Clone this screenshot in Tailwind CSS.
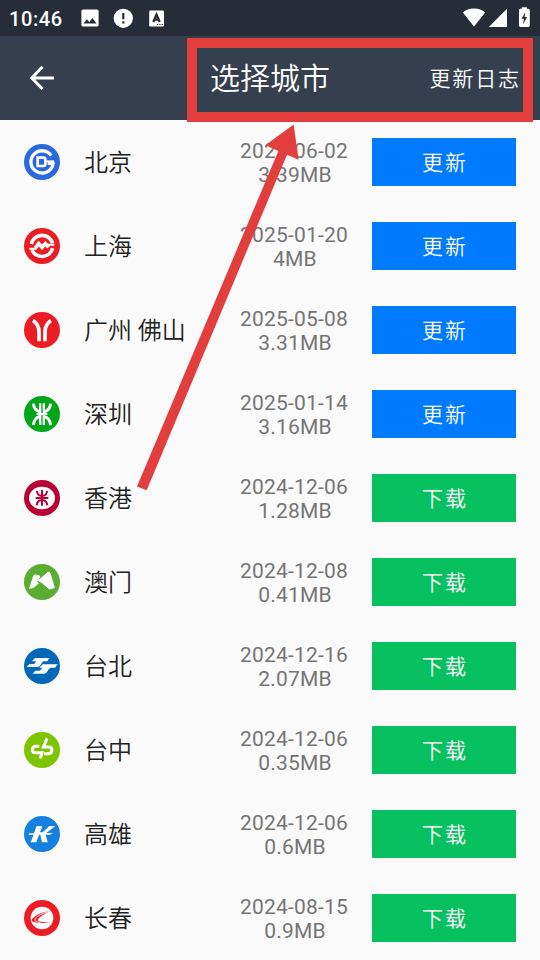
<!DOCTYPE html>
<html lang="zh-CN">
<head>
<meta charset="utf-8">
<meta name="viewport" content="width=device-width, initial-scale=1">
<title>选择城市</title>
<script src="https://cdn.jsdelivr.net/npm/@tailwindcss/browser@4"></script>
</head>
<body class="bg-[#fafafa]">
<div class="relative w-[540px] h-[960px] overflow-hidden bg-[#fafafa] font-[Roboto,'Noto_Sans_CJK_SC',sans-serif] text-[#212121]">
  <div class="h-9 bg-[#262d38] flex items-center text-white pl-[9px] pr-[10px]">
    <span class="text-[20px] leading-9 font-medium w-[72px] tracking-[0.600px] pt-px">10:46</span>
    <svg class="w-[18px] h-[18px]" viewBox="0 0 18 18"><path fill="#fff" fill-rule="evenodd" d="M2 .5h14a1.6 1.6 0 0 1 1.6 1.6v13.8a1.6 1.6 0 0 1-1.6 1.6H2A1.6 1.6 0 0 1 .4 15.900V2.100A1.600 1.600 0 0 1 2 .5zM2.500 14.500h13L11.500 9l-3.200 4.100L6 10.300z"/></svg>
    <svg class="w-5 h-5 ml-[14px]" viewBox="0 0 20 20"><circle cx="10.300" cy="10.300" r="9.600" fill="#fff"/><path stroke="#262d38" stroke-width="2.200" d="M10.300 5v6.300M10.300 13.200v2.300"/></svg>
    <svg class="w-4 h-[17px] ml-4" viewBox="0 0 16 17"><rect x=".2" y=".6" width="14.800" height="16" rx="1.300" fill="#fff"/><path fill="none" stroke="#262d38" stroke-width="2.200" d="M4.300 12 7.500 4.600l3.200 7.400M5.200 9.600h4.600"/><path stroke="#262d38" stroke-width="1.200" d="M8 14.500h1.200M10.300 14.500h1.200M12.600 14.500h1.200"/></svg>
    <svg class="w-[70px] h-9 ml-auto" viewBox="460 0 70 36"><path fill="#fff" d="M462.800 12.500Q467 8.400 474 8.400t11.200 4.100L474 26.400zM507 8.800V27h-18.200zM519 10.200q0-1.400 1.400-1.400h1.400V7.200h5v1.600h1.600q1.400 0 1.400 1.400v15.400q0 1.400-1.400 1.400h-8q-1.400 0-1.400-1.400z"/><path fill="#262d38" d="M525.300 12.300l-3.800 6.500h2.400l-.8 5.500 4-7.200h-2.500z"/></svg>
  </div>
  <header class="h-[84px] bg-[#34404f] flex items-center text-white pl-[29px] pr-[19px]">
    <svg class="w-[27px] h-[26px]" viewBox="0 0 27 26"><path fill="none" stroke="#fff" stroke-width="3" d="M13.500 1.800 2.800 13l10.700 11M2.800 13H25"/></svg>
    <h1 class="ml-[154px] text-[30px] leading-[42px] font-[350] pt-0.5">选择城市</h1>
    <span class="ml-auto text-[21px] leading-[30px] tracking-[1.900px] font-[350] pt-0.5">更新日志</span>
  </header>
  <main id="list"></main>
  <div class="absolute left-[187px] top-[38px] w-[346px] h-[84px] border-[10px] border-[#e33e3e]"></div>
  <svg class="absolute left-0 top-0 w-[540px] h-[960px]" viewBox="0 0 540 960"><path fill="#e33e3e" d="M293.700 124.600 265.300 145.300l13.100 5.600L137 486.600l9.700 3.700L287 154.800l11.500 4.900z"/></svg>
</div>
<script>
const logos = {
  beijing: '<circle cx="54" cy="54" r="54" fill="#2968df"/><g fill="none" stroke="#fff"><path stroke-width="10" d="M82 35A33.500 33.500 0 1 0 83 71Q87 65 87 58H71"/><path stroke-width="8" d="M41 41h17q6 0 6 6v13q0 6-6 6H41z"/><path stroke-width="6" d="M64 52h26"/></g>',
  shanghai: '<circle cx="54" cy="54" r="54" fill="#ec1c24"/><g fill="none" stroke="#fff" stroke-width="11"><path d="M22 48A33 33 0 0 1 86 46M86 61A33 33 0 0 1 24 66"/><path stroke-width="11" d="M34 60 44 47l10 11 10-11 10 11"/><path stroke-width="6" d="M16 62h22M70 50h21"/></g>',
  guangzhou: '<circle cx="54" cy="54" r="54" fill="#ec1c24"/><path fill="none" stroke="#fff" stroke-width="11" d="M27 26Q45 37 45 60V88M81 26Q63 37 63 60V88"/>',
  shenzhen: '<circle cx="54" cy="54" r="54" fill="#00a718"/><g fill="none" stroke="#fff"><path stroke-width="9" d="M28 23q2 20 20 25M80 23q-2 20-20 25M28 87q2-21 20-26M80 87q-2-21-20-26"/><path stroke-width="7" d="M48.500 22v65M59.500 22v65"/><path stroke-width="6" d="M38 54h32"/></g>',
  hongkong: '<circle cx="54" cy="54" r="54" fill="#b80035"/><ellipse cx="54" cy="54" rx="39" ry="34" fill="#fff"/><path fill="none" stroke="#b80035" stroke-width="6" d="M54 30v47M35 54h38M39 33q1 13 11 14h8q10-1 11-14M38 76q2-14 12-15h8q10 1 12 15"/>',
  macau: '<circle cx="54" cy="54" r="54" fill="#5aad31"/><path fill="#fff" stroke="#fff" stroke-width="3" stroke-linejoin="round" d="M17 73 29 36q2-4 6-3l12 3-2 8-7 9 5 5-14 12zM72 25q4-3 6 2L91 71 76 75 54 56 43 50z"/>',
  taipei: '<circle cx="54" cy="54" r="54" fill="#0068b7"/><g fill="#fff"><path id="tp" d="M33 30h44l-8 10h-9q-4 0-7 5l-5 8q-3 4-8 4H8l8-9h12q4 0 6-4l2-4H24z"/><path d="M56 49h45l-8 10H81q-4 0-7 5l-5 8q-3 5-8 5H26l8-9h12q4 0 6-4l2-5h-8z"/></g>',
  taichung: '<circle cx="54" cy="54" r="54" fill="#7cc500"/><g fill="none" stroke="#fff" stroke-width="9"><path d="M46 43H35q-10 1-10 10 0 9 10 9h19l-5 17"/><path d="M60 65h13q11-1 11-11 0-9-10-9H58l11-26"/></g>',
  kaohsiung: '<circle cx="54" cy="54" r="54" fill="#1680df"/><path fill="#fff" d="M38 30h17l-7 19h8l20-19h18L67 51h20l-9 5H65l6 23H54l-5-23h-4l-8 23H20l9-23H13l3-4h14z"/>',
  changchun: '<circle cx="54" cy="54" r="54" fill="#ed1c24"/><circle cx="54" cy="54" r="34" fill="#fff"/><path fill="#ed1c24" d="M80 32Q39 38 24 57q-6 11 22 12l37-1q-43-1-42-8 2-10 39-28z"/><path fill="none" stroke="#fff" stroke-width="2.500" d="M79 33Q41 43 33 57q-4 9 17 10"/>'
};
const cities = [
  ['beijing', '北京', '2025-06-02', '3.39MB', true],
  ['shanghai', '上海', '2025-01-20', '4MB', true],
  ['guangzhou', '广州 佛山', '2025-05-08', '3.31MB', true],
  ['shenzhen', '深圳', '2025-01-14', '3.16MB', true],
  ['hongkong', '香港', '2024-12-06', '1.28MB', false],
  ['macau', '澳门', '2024-12-08', '0.41MB', false],
  ['taipei', '台北', '2024-12-16', '2.07MB', false],
  ['taichung', '台中', '2024-12-06', '0.35MB', false],
  ['kaohsiung', '高雄', '2024-12-06', '0.6MB', false],
  ['changchun', '长春', '2024-08-15', '0.9MB', false]
];
document.getElementById('list').innerHTML = cities.map(([logo, name, date, size, installed]) => `
  <div class="h-[84px] flex items-center px-6">
    <svg class="w-9 h-9 shrink-0" viewBox="0 0 108 108">${logos[logo]}</svg>
    <span class="ml-6 w-[132px] pt-0.5 text-2xl leading-9 font-[350] whitespace-nowrap">${name}</span>
    <div class="w-[156px] pt-0.5 text-center text-[21px] leading-6 text-[#757575] tracking-[0.200px]"><div>${date}</div><div class="pl-0.5">${size}</div></div>
    <button class="${installed ? 'bg-[#007aff]' : 'bg-[#07c160]'} w-36 h-12 pt-0.5 pl-0.5 text-white text-[21px] leading-[30px] tracking-[1.900px] font-[350]">${installed ? '更新' : '下载'}</button>
  </div>`).join('');
</script>
</body>
</html>
